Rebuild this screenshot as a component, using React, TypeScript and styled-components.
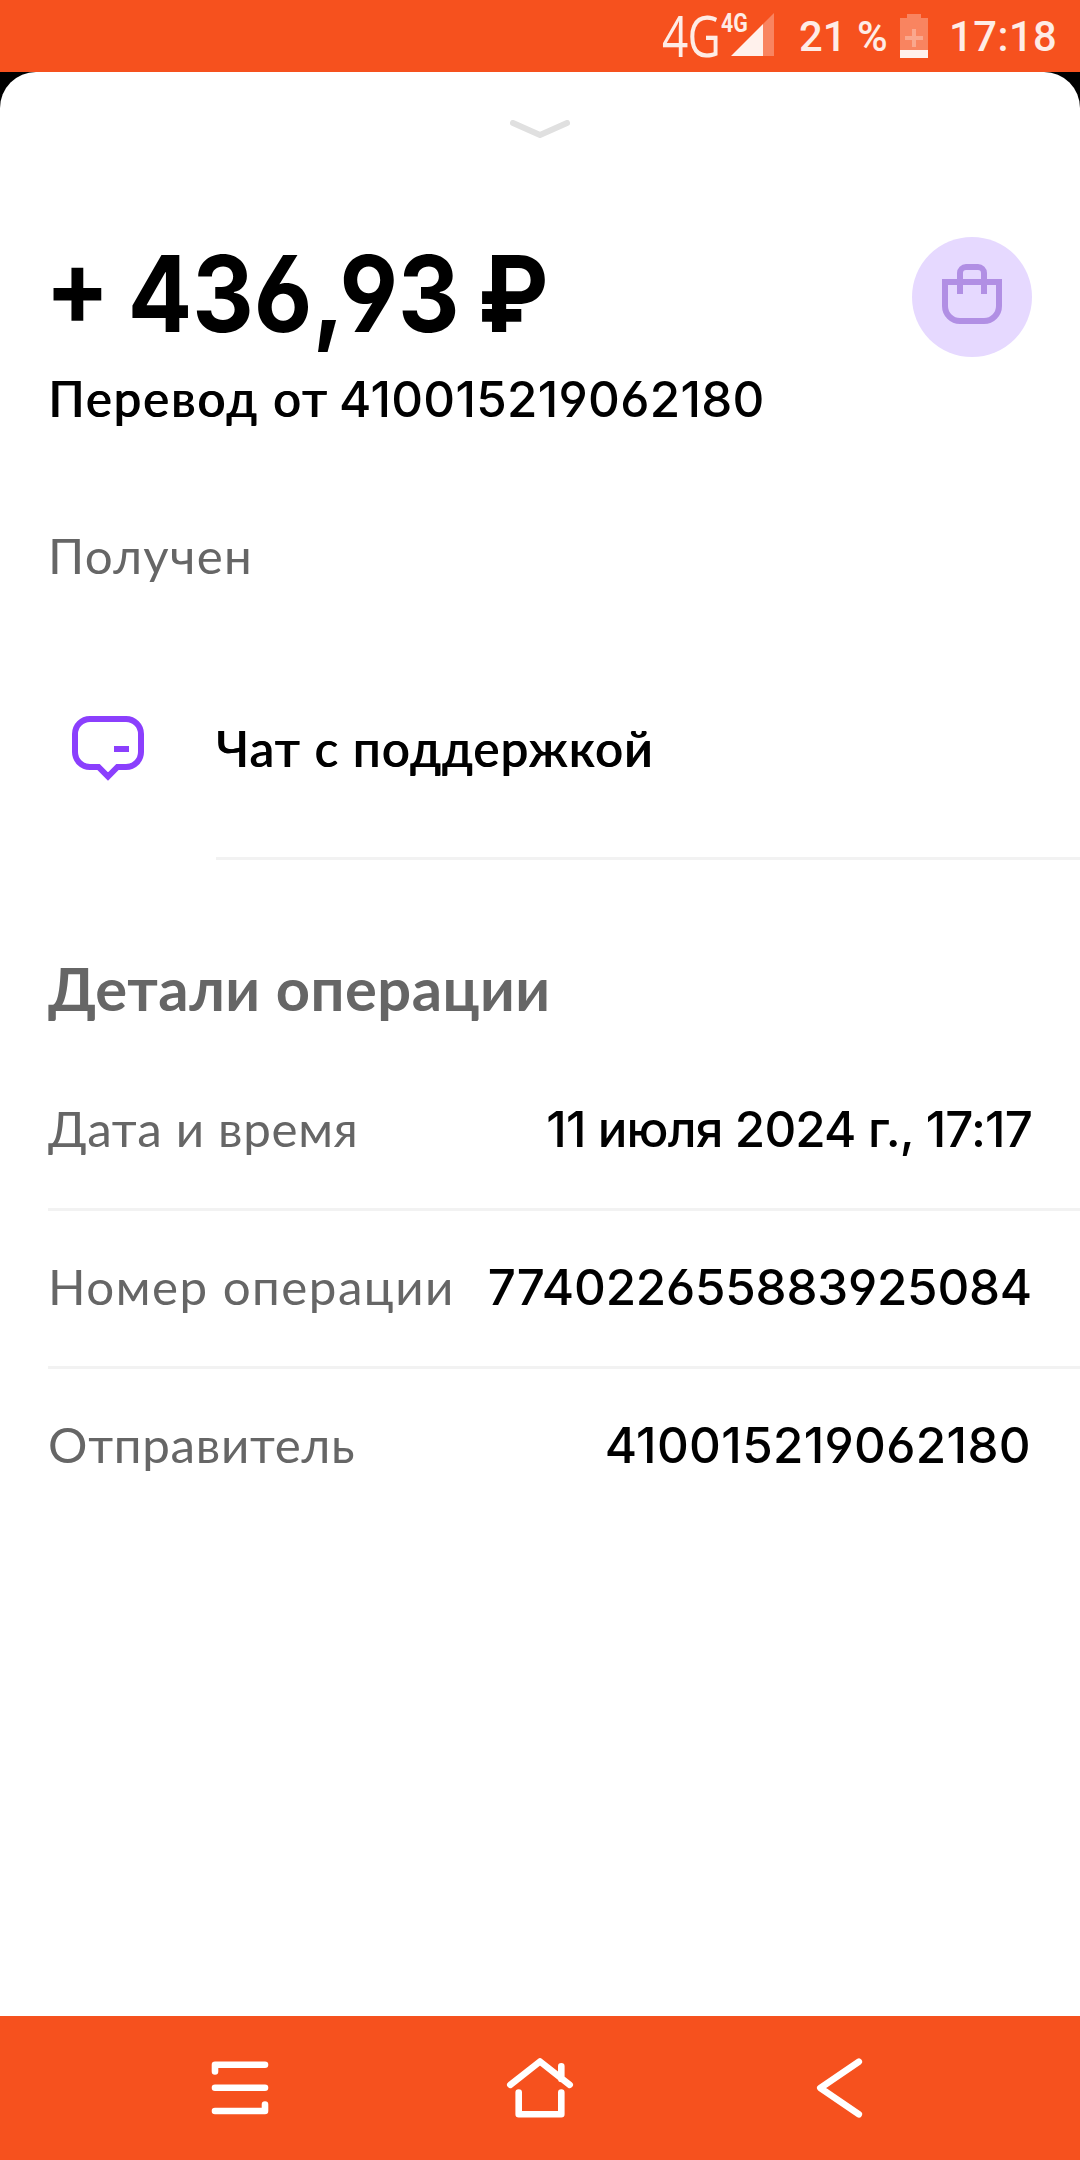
import React from 'react';
import styled, { createGlobalStyle } from 'styled-components';

const ORANGE = '#f6511e';
const NUMBER_FONT = 'Inter, "Noto Sans", sans-serif';
const LABEL_FONT = 'Lato, "Noto Sans", sans-serif';

const GlobalStyle = createGlobalStyle`
  * { box-sizing: border-box; }
  body { margin: 0; background: #000; }
`;

const Screen = styled.div`
  display: flex;
  flex-direction: column;
  width: 1080px;
  height: 2160px;
  background: #000;
  font-family: ${NUMBER_FONT};
  font-feature-settings: 'cv03', 'cv04';
  overflow: hidden;
`;

const StatusBar = styled.header`
  display: flex;
  justify-content: flex-end;
  height: 72px;
  padding-right: 24px;
  background: ${ORANGE};
  color: #feece6;
`;

const Network = styled.div`
  width: 75px;
  margin-right: -18px;
  height: 72px;
  font: 400 56px/71px 'Open Sans', sans-serif;
  letter-spacing: -1px;
  white-space: nowrap;
  transform: scaleX(0.82);
  transform-origin: left center;
`;

const Signal = styled.div`
  position: relative;
  width: 55px;
  height: 72px;
  margin-right: 25px;
`;

const SignalLabel = styled.span`
  position: absolute;
  left: 2px;
  top: 10px;
  font: 700 26px/27px Roboto, sans-serif;
  transform: scaleX(0.82);
  transform-origin: left center;
`;

const SignalIcon = styled.svg`
  position: absolute;
  left: 12px;
  top: 13px;
`;

const StatusText = styled.span<{ $width: number; $track: number }>`
  width: ${(p) => p.$width}px;
  padding-top: 1px;
  font: 500 41.7px/72px Roboto, sans-serif;
  letter-spacing: ${(p) => p.$track}px;
  white-space: nowrap;
`;

const BatteryIcon = styled.svg`
  margin: 14px 21px 0 0;
`;

const Sheet = styled.main`
  display: flex;
  flex-direction: column;
  flex: 1;
  background: #fff;
  border-radius: 36px 36px 0 0;
`;

const Handle = styled.div`
  display: flex;
  justify-content: center;
  height: 164px;
  padding-top: 48px;
`;

const Summary = styled.section`
  display: flex;
  justify-content: space-between;
  align-items: flex-start;
  height: 193px;
  padding: 0 48px;
`;

const Amount = styled.h1`
  margin: 0 0 0 -3px;
  font-size: 105.5px;
  line-height: 116px;
  font-weight: 700;
  color: #000;
  white-space: pre;
  word-spacing: -5px;
  transform: scaleX(0.904);
  transform-origin: left center;
`;

const Badge = styled.div`
  display: flex;
  justify-content: center;
  width: 120px;
  height: 120px;
  margin-top: 1px;
  padding-top: 27px;
  border-radius: 50%;
  background: #e6d9ff;
`;

const Value = styled.span<{ $track?: number; $shift?: number }>`
  font-size: 49.3px;
  line-height: 60px;
  font-weight: 500;
  color: #000;
  letter-spacing: ${(p) => p.$track ?? 0}px;
  margin-right: ${(p) => p.$shift ?? 0}px;
  white-space: nowrap;
`;

const Label = styled.span<{ $strong?: boolean; $track?: number; $width?: number }>`
  width: ${(p) => (p.$width ? `${p.$width}px` : 'auto')};
  padding-bottom: 2px;
  font-family: ${LABEL_FONT};
  font-size: 49.3px;
  line-height: 58px;
  font-weight: ${(p) => (p.$strong ? 500 : 400)};
  color: ${(p) => (p.$strong ? '#000' : '#666')};
  text-shadow: ${(p) => (p.$strong ? '0.8px 0 #000' : 'none')};
  letter-spacing: ${(p) => p.$track ?? 0}px;
  white-space: nowrap;
`;

const Description = styled.div`
  display: flex;
  align-items: baseline;
  margin-top: 17px;
`;

const State = styled.div`
  display: flex;
  padding: 97px 48px 54px;
`;

const Action = styled.div`
  display: flex;
  height: 220px;
`;

const ActionIcon = styled.div`
  display: flex;
  justify-content: center;
  align-items: center;
  width: 216px;
  padding-bottom: 2px;
`;

const ActionBody = styled.div`
  display: flex;
  flex: 1;
  align-items: center;
  border-bottom: 3px solid #f2f2f2;
`;

const SectionTitle = styled.h2`
  margin: 93px 0 30px;
  padding-left: 48px;
  font-family: ${LABEL_FONT};
  font-size: 59.7px;
  line-height: 70px;
  font-weight: 700;
  letter-spacing: 0.5px;
  color: #666;
`;

const DetailRow = styled.div<{ $last?: boolean }>`
  display: flex;
  align-items: center;
  justify-content: space-between;
  height: 158px;
  margin-left: 48px;
  padding: 0 48px 4px 0;
  border-bottom: 3px solid ${(p) => (p.$last ? 'transparent' : '#f2f2f2')};
`;

const NavBar = styled.nav`
  display: flex;
  justify-content: center;
  gap: 200px;
  height: 144px;
  padding-top: 22px;
  background: ${ORANGE};
`;

const NavIcon = styled.svg`
  width: 100px;
  height: 100px;
  fill: none;
  stroke: #fff;
  stroke-width: 6.6;
  stroke-linecap: round;
  stroke-linejoin: round;
`;

const details = [
  { label: 'Дата и время', value: '11 июля 2024 г., 17:17', labelTrack: 0.68, valueTrack: -0.85, shift: 0 },
  { label: 'Номер операции', value: '774022655883925084', labelTrack: 1.47, valueTrack: -0.2, shift: 0 },
  { label: 'Отправитель', value: '410015219062180', labelTrack: 0.71, valueTrack: 0.36, shift: 1 },
];

export default function App() {
  return (
    <Screen>
      <GlobalStyle />
      <StatusBar>
        <Network>4G</Network>
        <Signal>
          <SignalIcon width="43" height="43" viewBox="0 0 43 43">
            <path d="M32 11 43 0V43H32Z" fill="#f98460" />
            <path d="M0 43 32 11V43Z" fill="#fff1ec" />
          </SignalIcon>
          <SignalLabel>4G</SignalLabel>
        </Signal>
        <StatusText $width={101} $track={0.1}>21 %</StatusText>
        <BatteryIcon width="28" height="44" viewBox="0 0 28 44">
          <path d="M0 4H7V0H21V4H28V36H0Z" fill="#f98460" />
          <path d="M12 15H16V22H23V26H16V33H12V26H5V22H12Z" fill="#faa78d" />
          <path d="M0 36H28V44H0Z" fill="#fff1ec" />
        </BatteryIcon>
        <StatusText $width={107} $track={0.5}>17:18</StatusText>
      </StatusBar>

      <Sheet>
        <Handle>
          <svg width="60" height="18" viewBox="0 0 60 18" fill="none" stroke="#e0e0e0" strokeWidth="6" strokeLinecap="round">
            <path d="M3 3 30 15 57 3" />
          </svg>
        </Handle>

        <Summary>
          <div>
            <Amount>+ 436,93 ₽</Amount>
            <Description>
              <Label $strong $track={1.8} $width={291}>Перевод от</Label>
              <Value $track={0.32}>410015219062180</Value>
            </Description>
          </div>
          <Badge>
            <svg width="60" height="60" viewBox="0 0 60 60" fill="none" stroke="#b18fe4" strokeWidth="6">
              <path d="M3 18H57V42A15 15 0 0 1 42 57H18A15 15 0 0 1 3 42Z" />
              <path d="M18 30V9A6 6 0 0 1 24 3H36A6 6 0 0 1 42 9V30" />
            </svg>
          </Badge>
        </Summary>

        <State>
          <Label $track={1.27}>Получен</Label>
        </State>

        <Action>
          <ActionIcon>
            <svg width="72" height="66" viewBox="0 0 72 66" fill="none" stroke="#8b3ffd" strokeWidth="6">
              <path d="M18 3H54A15 15 0 0 1 69 18V36A15 15 0 0 1 54 51H45.5L36 60.5 26.5 51H18A15 15 0 0 1 3 36V18A15 15 0 0 1 18 3Z" />
              <path d="M42 33H57" />
            </svg>
          </ActionIcon>
          <ActionBody>
            <Label $strong $track={1.15}>Чат с поддержкой</Label>
          </ActionBody>
        </Action>

        <SectionTitle>Детали операции</SectionTitle>
        {details.map((d, i) => (
          <DetailRow key={d.label} $last={i === details.length - 1}>
            <Label $track={d.labelTrack}>{d.label}</Label>
            <Value $track={d.valueTrack} $shift={d.shift}>{d.value}</Value>
          </DetailRow>
        ))}
      </Sheet>

      <NavBar>
        <NavIcon viewBox="0 0 100 100">
          <path d="M25 33.500V26.800H75M25 49.800H75M25 73H75V66.500" />
        </NavIcon>
        <NavIcon viewBox="0 0 100 100">
          <path d="M20.300 46.800 50 23.500 79.700 46.800M71.300 28.300V41M28.700 54.600V76.300H71.300V54.600" />
        </NavIcon>
        <NavIcon viewBox="0 0 100 100">
          <path d="M68.800 23.700 30.300 50 68.800 76.300" />
        </NavIcon>
      </NavBar>
    </Screen>
  );
}
